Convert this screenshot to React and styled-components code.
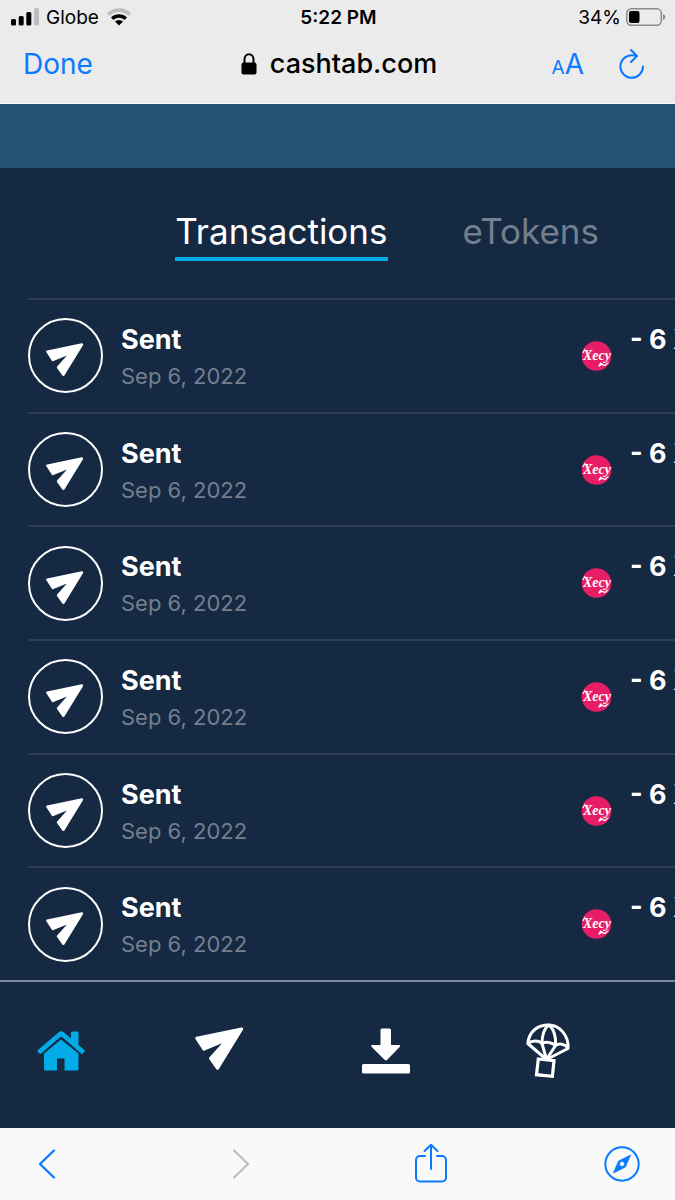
import React from "react";
import styled, { createGlobalStyle } from "styled-components";

const GlobalStyle = createGlobalStyle`
  * {
    box-sizing: border-box;
  }
  body {
    margin: 0;
    background-color: #152943;
    font-family: Inter, "Liberation Sans", sans-serif;
  }
  button {
    border: 0;
    padding: 0;
    background: none;
    font-family: inherit;
    cursor: pointer;
  }
  svg {
    display: block;
    overflow: visible;
  }
`;

const transactions = [1, 2, 3, 4, 5, 6].map((id) => ({
  id,
  type: "Sent",
  date: "Sep 6, 2022",
  amount: "- 6 XEC",
}));

/* ---------- icons ---------- */

const SignalIcon = () => (
  <svg width="28" height="18" viewBox="0 0 28 18">
    <rect x="0" y="11" width="5" height="6.5" rx="1.5" />
    <rect x="7.7" y="8" width="5" height="9.5" rx="1.5" />
    <rect x="15.3" y="4" width="5" height="13.5" rx="1.5" />
    <rect x="23" y="0" width="5" height="17.5" rx="1.5" fill="#bdbdbd" />
  </svg>
);

const WifiIcon = () => (
  <svg width="26" height="18" viewBox="0 0 26 18">
    <path d="M1 5.2A17 17 0 0 1 25 5.2L22.5 7.8A13.5 13.5 0 0 0 3.5 7.8Z" fill="#bdbdbd" />
    <path d="M5 9.4A11.5 11.5 0 0 1 21 9.4L18.5 12A8 8 0 0 0 7.5 12Z" />
    <path d="M9 13.6A5.8 5.8 0 0 1 17 13.6L13 17.6Z" />
  </svg>
);

const BatteryIcon = () => (
  <svg width="40" height="18" viewBox="0 0 40 18">
    <rect x="0.8" y="0.8" width="34.5" height="16.5" rx="4.5" fill="none" stroke="#8b8b8b" strokeWidth="1.5" />
    <rect x="3" y="3" width="10.5" height="12" rx="2" />
    <path d="M37 6C40 7 40 11 37 12Z" fill="#8b8b8b" />
  </svg>
);

const LockIcon = () => (
  <svg width="16" height="22" viewBox="0 0 16 22">
    <path d="M3.5 11V6.5a4.5 5.3 0 0 1 9 0V11" fill="none" stroke="#000" strokeWidth="2" />
    <rect x="0.5" y="9.5" width="15" height="12" rx="2" />
  </svg>
);

const ReloadIcon = () => (
  <svg width="26" height="30" viewBox="0 0 26 30" fill="none" stroke="#0a7aff" strokeWidth="2" strokeLinecap="round" strokeLinejoin="round">
    <path d="M24 17.5A11.3 11.3 0 1 1 12.7 6.2Q15.5 6.2 17.5 7" />
    <path d="M12 1L18 7L12 13" />
  </svg>
);

const PlaneIcon = ({ size }) => (
  <svg width={size} height={size} viewBox="0 0 48 48">
    <path
      d="M1.8 11.2L46.6 2L22.5 41.2L15.6 31.4L33 12L9 22Z"
      fill="#fff"
      stroke="#fff"
      strokeWidth="3.2"
      strokeLinejoin="round"
    />
  </svg>
);

const HomeIcon = () => (
  <svg width="48" height="40" viewBox="0 0 48 40" fill="#00abe7">
    <path d="M24 8.5L7 22.5V38a1.5 1.5 0 0 0 1.5 1.5H20V27.5h7.5V39.5H40a1.5 1.5 0 0 0 1.5-1.5V22.5Z" />
    <path d="M22 1.1a3.5 3.5 0 0 1 4.5 0L34 7.5V1.5a1 1 0 0 1 1-1h5.5a1 1 0 0 1 1 1V14l6 5.2a1 1 0 0 1 .1 1.4l-1.8 2a1 1 0 0 1-1.4.1L25 6a1.2 1.2 0 0 0-1.6 0L3.8 22.7a1 1 0 0 1-1.4-.1l-1.8-2a1 1 0 0 1 .1-1.4Z" />
  </svg>
);

const DownloadIcon = () => (
  <svg width="48" height="46" viewBox="0 0 48 46" fill="#fff">
    <path d="M20 .5h7.5a1.5 1.5 0 0 1 1.5 1.5V17h8.2a1 1 0 0 1 .7 1.7L25.5 31.4a2.2 2.2 0 0 1-3.2 0L9.5 18.7a1 1 0 0 1 .7-1.7H18.5V2A1.5 1.5 0 0 1 20 .5Z" />
    <rect x="0" y="36" width="48" height="9.5" rx="1.5" />
  </svg>
);

const AirdropIcon = () => (
  <svg width="46" height="56" viewBox="0 0 46 56" fill="none" stroke="#fff" strokeWidth="3" strokeLinejoin="round">
    <path d="M1.8 20.5C3 8.5 11.5 2 22.5 2S43 12.500 42 25.500L20.500 36.500Z" />
    <path d="M1.8 20.5C6 17 13 17 16 20.5C20 18.5 26 19 29.500 22.500C33 20 39 21 42 25" />
    <path d="M20.500 36.500L16 20.500C16 13 18 6 22.500 2C27.500 5 30.500 14 29.500 22.500L20.500 36.500" />
    <path d="M12.300 36L28 37.600L26.400 53.300L10.500 51.700Z" strokeLinejoin="miter" strokeWidth="3.2" />
  </svg>
);

const ChevronIcon = ({ color, forward }) => (
  <svg width="17" height="30" viewBox="0 0 17 30" fill="none" stroke={color} strokeWidth="2.3" strokeLinecap="round" strokeLinejoin="round">
    <path d={forward ? "M2 1.500L16 15L2 28.500" : "M17 1.500L3 15L17 28.500"} />
  </svg>
);

const ShareIcon = () => (
  <svg width="32" height="40" viewBox="0 0 32 40" fill="none" stroke="#0a7aff" strokeWidth="2" strokeLinecap="round" strokeLinejoin="round">
    <path d="M11 12H6A4 4 0 0 0 2 16V33.500a4 4 0 0 0 4 4H28a4 4 0 0 0 4-4V16A4 4 0 0 0 28 12H23" />
    <path d="M17 25V1M10.500 7L17 .7L23.500 7" />
  </svg>
);

const CompassIcon = () => (
  <svg width="36" height="36" viewBox="0 0 36 36">
    <circle cx="18" cy="18" r="16.7" fill="none" stroke="#0a7aff" strokeWidth="2" />
    <path
      d="M26.8 8.8L21.5 21L9.2 27.2L14.5 15ZM20.4 18a2.4 2.4 0 1 0-4.8 0a2.4 2.4 0 1 0 4.8 0Z"
      fill="#0a7aff"
      stroke="#0a7aff"
      strokeWidth="0.6"
      strokeLinejoin="round"
      fillRule="evenodd"
    />
  </svg>
);

// round token badge, wordmark with a swash under the last letter
const TokenIcon = () => (
  <svg width="30" height="30" viewBox="0 0 30 30">
    <circle cx="15.5" cy="15" r="14.8" fill="#e71e65" />
    <text x="2" y="19" fill="#fff" fontFamily="'Liberation Serif', serif" fontSize="14" fontStyle="italic" fontWeight="700">
      Xecy
    </text>
    <path
      d="M2 11.5L4 8.5M20 22C17 25.5 18 25.5 20 23.8C22 22 22 24.8 24 24.3C25.500 24 25.500 22.500 27 22"
      fill="none"
      stroke="#fff"
      strokeWidth="1.3"
      strokeLinecap="round"
    />
  </svg>
);

/* ---------- page ---------- */

const TransactionRow = ({ type, date, amount }) => (
  <Row>
    <PlaneCircle>
      <PlaneIcon size={37} />
    </PlaneCircle>
    <RowInfo>
      <RowTitle>{type}</RowTitle>
      <RowDate>{date}</RowDate>
    </RowInfo>
    <TokenIcon />
    <Amount>{amount}</Amount>
  </Row>
);

const App = () => {
  return (
    <Wrapper>
      <GlobalStyle />
      <BrowserHeader>
        <StatusBar>
          <StatusGroup>
            <SignalIcon />
            <span>Globe</span>
            <WifiIcon />
          </StatusGroup>
          <Clock>5:22 PM</Clock>
          <StatusGroup $end>
            <span>34%</span>
            <BatteryIcon />
          </StatusGroup>
        </StatusBar>
        <AddressBar>
          <DoneButton>Done</DoneButton>
          <Address>
            <LockIcon />
            <span>cashtab.com</span>
          </Address>
          <AddressActions>
            <TextSizeButton aria-label="Text size">
              <small>A</small>A
            </TextSizeButton>
            <button aria-label="Reload">
              <ReloadIcon />
            </button>
          </AddressActions>
        </AddressBar>
      </BrowserHeader>

      <Banner />

      <Main>
        <Tabs>
          <Tab $active>Transactions</Tab>
          <Tab>eTokens</Tab>
        </Tabs>
        <List>
          {transactions.map((tx) => (
            <TransactionRow key={tx.id} {...tx} />
          ))}
        </List>
      </Main>

      <AppNav>
        <button aria-label="Home">
          <HomeIcon />
        </button>
        <button aria-label="Send">
          <PlaneIcon size={48} />
        </button>
        <button aria-label="Receive">
          <DownloadIcon />
        </button>
        <button aria-label="Airdrop">
          <AirdropIcon />
        </button>
      </AppNav>

      <BrowserFooter>
        <button aria-label="Back">
          <ChevronIcon color="#0a7aff" />
        </button>
        <button aria-label="Forward" disabled>
          <ChevronIcon color="#bfbfbf" forward />
        </button>
        <button aria-label="Share">
          <ShareIcon />
        </button>
        <button aria-label="Open in browser">
          <CompassIcon />
        </button>
      </BrowserFooter>
    </Wrapper>
  );
};

export default App;

const Wrapper = styled.div`
  display: flex;
  flex-direction: column;
  min-height: 100vh;
  overflow: hidden;
  background-color: #152943;
  color: #fff;
`;

const BrowserHeader = styled.header`
  background-color: #ebebeb;
  color: #000;
  padding-bottom: 16px;
  border-bottom: 1px solid #fafafa;
`;

const StatusBar = styled.div`
  display: grid;
  grid-template-columns: 1fr auto 1fr;
  align-items: center;
  height: 34px;
  padding: 0 9px 0 11px;
  font-size: 19px;
`;

const StatusGroup = styled.div`
  display: flex;
  align-items: center;
  justify-content: ${(props) => (props.$end ? "flex-end" : "flex-start")};
  gap: ${(props) => (props.$end ? "5px" : "7px")};
`;

const Clock = styled.span`
  font-weight: 600;
`;

const AddressBar = styled.div`
  display: grid;
  grid-template-columns: 1fr auto 1fr;
  align-items: center;
  height: 53px;
  padding: 6px 20px 0 23px;
`;

const DoneButton = styled.button`
  justify-self: start;
  color: #0a7aff;
  font-size: 28px;
`;

const Address = styled.div`
  display: flex;
  align-items: center;
  gap: 13px;
  font-size: 27px;
  font-weight: 500;
`;

const AddressActions = styled.div`
  display: flex;
  align-items: center;
  justify-content: flex-end;
  gap: 35px;
  padding-right: 10px;
`;

const TextSizeButton = styled.button`
  color: #0a7aff;
  font-size: 28px;
  small {
    font-size: 19px;
  }
`;

const Banner = styled.div`
  height: 64px;
  background-color: #255173;
`;

const Main = styled.main`
  display: flex;
  flex: 1;
  flex-direction: column;
  padding-left: 28px;
`;

const Tabs = styled.div`
  display: flex;
  justify-content: flex-end;
  gap: 75px;
  padding: 36px 76px 37px 0;
`;

const Tab = styled.button`
  height: 57px;
  border-bottom: 4px solid ${(props) => (props.$active ? "#00abe7" : "transparent")};
  color: ${(props) => (props.$active ? "#fff" : "#737f8e")};
  font-size: 35px;
  font-weight: 400;
`;

const List = styled.div`
  display: flex;
  flex: 1;
  flex-direction: column;
`;

const Row = styled.div`
  display: flex;
  flex: 1;
  align-items: center;
  min-height: 112px;
  border-top: 2px solid #2c3e55;
`;

const PlaneCircle = styled.div`
  display: flex;
  align-items: center;
  justify-content: center;
  width: 75px;
  height: 75px;
  padding: 12px 2px 0 0;
  border: 2px solid #fff;
  border-radius: 50%;
`;

const RowInfo = styled.div`
  flex: 1;
  padding: 4px 0 0 18px;
`;

const RowTitle = styled.div`
  font-size: 27px;
  font-weight: 700;
  line-height: 36px;
`;

const RowDate = styled.div`
  color: #737f8e;
  font-size: 22px;
  line-height: 36px;
`;

const Amount = styled.div`
  align-self: flex-start;
  width: 64px;
  padding: 22px 0 0 19px;
  overflow: hidden;
  font-size: 27px;
  font-weight: 700;
  line-height: 36px;
  white-space: nowrap;
`;

const AppNav = styled.nav`
  display: grid;
  grid-template-columns: 158fr 167fr 164fr 149fr;
  align-items: center;
  justify-items: start;
  height: 148px;
  padding: 0 0 8px 37px;
  border-top: 2px solid #7b8998;
`;

const BrowserFooter = styled.footer`
  display: grid;
  grid-template-columns: 195fr 182fr 190fr 71fr;
  align-items: center;
  justify-items: start;
  height: 72px;
  padding-left: 37px;
  background-color: #f9f9f9;
`;
